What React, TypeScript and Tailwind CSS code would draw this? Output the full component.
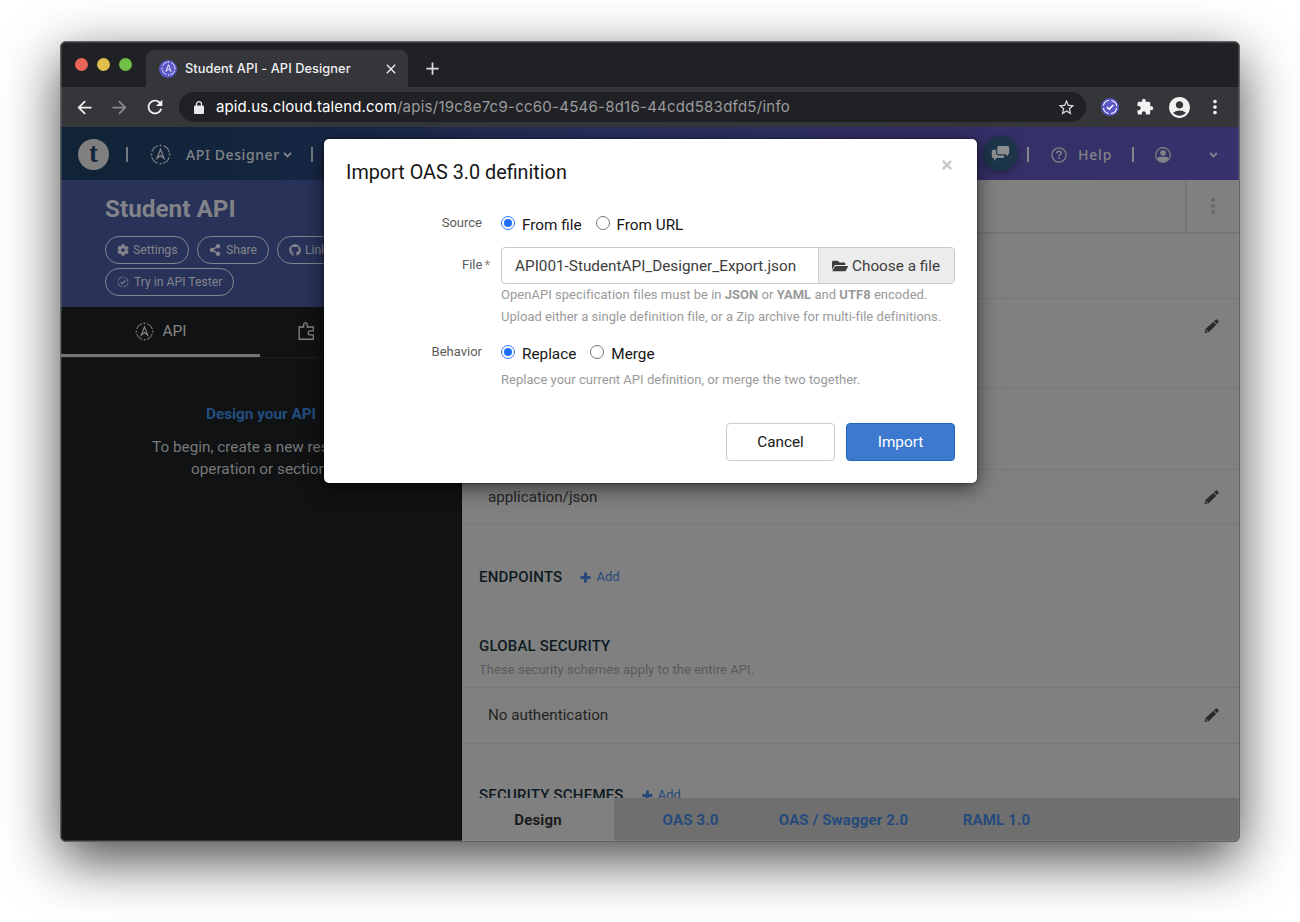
import React from "react";
import {
  MdArrowBack,
  MdArrowForward,
  MdRefresh,
  MdStarBorder,
  MdExtension,
  MdAccountCircle,
  MdMoreVert,
  MdClose,
  MdAdd,
} from "react-icons/md";
import { FaCog, FaShareAlt, FaGithub, FaFolderOpen, FaTimes } from "react-icons/fa";

function Compass({ className = "" }: { className?: string }) {
  return (
    <svg viewBox="0 0 20 20" className={className} fill="none" stroke="currentColor">
      <circle cx="10" cy="10" r="8.7" strokeWidth="1" strokeDasharray="8.66 5" strokeDashoffset="-2.5" />
      <circle cx="10" cy="1.3" r="0.9" fill="currentColor" stroke="none" />
      <circle cx="10" cy="18.7" r="0.9" fill="currentColor" stroke="none" />
      <circle cx="1.3" cy="10" r="0.9" fill="currentColor" stroke="none" />
      <circle cx="18.7" cy="10" r="0.9" fill="currentColor" stroke="none" />
      <path d="M10 5 6.6 13.8 10 11 13.4 13.8z" strokeWidth="1.2" />
    </svg>
  );
}

function CheckRing({ className = "" }: { className?: string }) {
  return (
    <svg viewBox="0 0 20 20" className={className} fill="none" stroke="currentColor">
      <circle cx="10" cy="10" r="8.4" strokeWidth="1.3" strokeDasharray="10.2 3" strokeDashoffset="-1.5" />
      <path d="M6.2 10.2 9 12.8 14 7.4" strokeWidth="2" />
    </svg>
  );
}

function Chevron({ className = "" }: { className?: string }) {
  return (
    <svg viewBox="0 0 10 8" className={className} fill="none" stroke="currentColor" strokeWidth="2.2">
      <path d="M1.2 1.8 5 5.6 8.8 1.8" />
    </svg>
  );
}

function Plus() {
  return (
    <svg viewBox="0 0 11 11" className="mr-[5px] h-[11px] w-[11px]" fill="currentColor">
      <path d="M4 0.5h3V4h3.500v3H7v3.500H4V7H0.500V4H4z" />
    </svg>
  );
}

function Pencil() {
  return (
    <svg viewBox="0 0 16 16" className="h-[15px] w-[15px] text-[#2a2a2a]" fill="currentColor">
      <path d="M10.700 2.400 12.300.9a1.400 1.400 0 0 1 2 0l.9.9a1.400 1.400 0 0 1 0 2L13.700 5.400z" />
      <path fillRule="evenodd" d="M10.100 3 13.100 6 5.300 13.800 1.300 14.900l-.6-.6 1.100-4zM2.800 11.500l-.5 1.700.5.5 1.700-.5z" />
    </svg>
  );
}

function Radio({ checked, label }: { checked?: boolean; label: string }) {
  return (
    <label className="flex h-5 items-start">
      <span
        className={
          checked
            ? "flex h-[14px] w-[14px] items-center justify-center rounded-full border border-[#2b78f5] bg-white"
            : "h-[14px] w-[14px] rounded-full border border-[#767676] bg-white"
        }
      >
        {checked && <span className="h-[8px] w-[8px] rounded-full bg-[#1f70f5]" />}
      </span>
      <span className="ml-[7px] text-[15.3px] leading-[18px] text-[#161616]">{label}</span>
    </label>
  );
}

function BrowserChrome() {
  return (
    <>
      <div className="flex h-[45px] shrink-0 items-end bg-[#202124]">
        <div className="flex h-full w-[85px] items-center gap-[9px] pb-[1px] pl-[14px]">
          <span className="h-[13px] w-[13px] rounded-full bg-[#ec6559]" />
          <span className="h-[13px] w-[13px] rounded-full bg-[#e1bf4e]" />
          <span className="h-[13px] w-[13px] rounded-full bg-[#71bf46]" />
        </div>
        <div className="flex h-[37px] w-[262px] items-center rounded-t-[8px] bg-[#35363a] pl-[13px] pr-[9px]">
          <span className="flex h-[18px] w-[18px] items-center justify-center rounded-full bg-[#5b57c7] text-white">
            <Compass className="h-[15px] w-[15px]" />
          </span>
          <span className="ml-[8px] flex-1 whitespace-nowrap pt-[1px] font-['Inter',sans-serif] text-[12.8px] font-medium tracking-[0.07px] text-[#eef0f1]">
            Student API - API Designer
          </span>
          <MdClose className="h-[16px] w-[16px] text-[#f1f1f1]" />
        </div>
        <div className="flex h-[37px] items-center pl-[14px]">
          <MdAdd className="h-[21px] w-[21px] text-[#dcdde0]" />
        </div>
      </div>
      <div className="flex h-[40px] shrink-0 items-center bg-[#35363a] pl-[13px]">
        <MdArrowBack className="h-[21px] w-[21px] text-[#f1f1f1]" />
        <MdArrowForward className="ml-[14px] h-[21px] w-[21px] text-[#8a8b8e]" />
        <MdRefresh className="ml-[14px] h-[22px] w-[22px] text-[#f1f1f1]" />
        <div className="ml-[13px] flex h-[30px] w-[907px] items-center rounded-full bg-[#202124] pl-[15px] pr-[10px]">
          <svg viewBox="0 0 10 13" className="h-[13px] w-[10px] text-[#e8e9eb]" fill="currentColor">
            <rect x="0" y="4.5" width="10" height="8.5" rx="1" />
            <path d="M2.5 5V3.200a2.500 2.500 0 0 1 5 0V5" fill="none" stroke="currentColor" strokeWidth="1.3" />
          </svg>
          <span className="ml-[12px] flex-1 whitespace-nowrap font-['Inter',sans-serif] text-[15px] tracking-[0.25px] text-[#9a9b9e]">
            <span className="tracking-[0.11px] text-white">apid.us.cloud.talend.com</span>
            /apis/19c8e7c9-cc60-4546-8d16-44cdd583dfd5/info
          </span>
          <MdStarBorder className="h-[19px] w-[19px] text-[#d5d6d9]" />
        </div>
        <span className="ml-[15px] flex h-[18px] w-[18px] items-center justify-center rounded-full bg-[#5b57c7] text-white">
          <CheckRing className="h-[16px] w-[16px]" />
        </span>
        <MdExtension className="ml-[17px] h-[18px] w-[18px] text-[#f1f1f1]" />
        <MdAccountCircle className="ml-[13px] h-[25px] w-[25px] text-[#f1f1f1]" />
        <MdMoreVert className="ml-[12px] h-[22px] w-[22px] text-[#f1f1f1]" />
      </div>
    </>
  );
}

function AppHeader() {
  return (
    <header className="flex h-[53px] shrink-0 items-center bg-[linear-gradient(90deg,#112336_0%,#142540_18%,#28305c_45%,#332f66_72%,#37326b_100%)] pl-[17px] pt-[2px] font-['Noto_Sans',sans-serif] text-[14px] font-medium text-[#828388]">
      <span className="flex h-[31px] w-[31px] items-center justify-center rounded-full bg-[#808080] pb-[3px] font-['Liberation_Serif',serif] text-[27px] font-bold leading-none text-[#13253a]">
        t
      </span>
      <span className="ml-[17px] h-[15px] w-[2px] bg-[#747a82]" />
      <Compass className="ml-[22px] h-[21px] w-[21px]" />
      <span className="ml-[15px] w-[97px] whitespace-nowrap tracking-[0.6px]">API Designer</span>
      <Chevron className="h-[8px] w-[9px]" />
      <span className="ml-[19px] h-[15px] w-[2px] bg-[#747a82]" />
      <span className="-mt-[2px] ml-[670px] flex h-[35px] w-[35px] items-center justify-center rounded-full bg-[#1c3549] text-[#8b8d8f] shadow-[0_2px_6px_rgba(0,0,0,0.3)]">
        <svg viewBox="0 0 20 18" className="h-[17px] w-[19px]" fill="currentColor">
          <path d="M8 1h9.800c.8 0 1.400.6 1.400 1.400v6c0 .8-.6 1.400-1.400 1.400v2.400L15.300 9.800H8c-.8 0-1.400-.6-1.400-1.400v-6C6.600 1.600 7.200 1 8 1z" />
          <path d="M5.400 5v3.600C5.400 10 6.400 11 7.800 11h6v1.400c0 .8-.6 1.400-1.400 1.400H6L3 17v-3.200h-.8c-.8 0-1.400-.6-1.400-1.400v-6C.8 5.600 1.400 5 2.200 5z" />
        </svg>
      </span>
      <span className="ml-[9px] h-[15px] w-[2px] bg-[#85858c]" />
      <svg viewBox="0 0 16 16" className="ml-[22px] h-[16px] w-[16px]" fill="none" stroke="currentColor">
        <circle cx="8" cy="8" r="7.1" strokeWidth="1.3" />
        <path d="M5.800 6.400C5.800 5 6.700 4.300 8 4.300s2.200.8 2.200 1.900c0 1.500-2.100 1.500-2.100 3" strokeWidth="1.5" />
        <path d="M8.100 10.300v1.600" strokeWidth="1.6" />
      </svg>
      <span className="ml-[11px] w-[36px] whitespace-nowrap tracking-[0.8px]">Help</span>
      <span className="ml-[18px] h-[15px] w-[2px] bg-[#85858c]" />
      <svg viewBox="0 0 16 16" className="ml-[21px] h-[16px] w-[16px]">
        <circle cx="8" cy="8" r="7.3" fill="none" stroke="currentColor" strokeWidth="1.2" />
        <circle cx="8" cy="6" r="2.8" fill="currentColor" />
        <path d="M2 11C4 9.300 12 9.300 14 11 12.500 14 10.500 15 8 15s-4.500-1-6-4z" fill="currentColor" />
      </svg>
      <Chevron className="ml-[38px] h-[8px] w-[9px]" />
    </header>
  );
}

function Pill({ children, className }: { children: React.ReactNode; className: string }) {
  return (
    <span
      className={
        "flex h-[28px] shrink-0 items-center whitespace-nowrap rounded-full border border-[#84858c] pl-[11px] text-[12.2px] text-[#84858c] " +
        className
      }
    >
      {children}
    </span>
  );
}

function Sidebar() {
  return (
    <aside className="flex w-[400px] shrink-0 flex-col overflow-hidden bg-[#101213]">
      <div className="h-[127px] shrink-0 bg-[#293259] pl-[44px] pt-[13px]">
        <h1 className="text-[24.3px] font-bold leading-[32px] text-[#828388]">Student API</h1>
        <div className="mt-[11px] flex gap-[8px]">
          <Pill className="w-[84px]">
            <FaCog className="mr-[4px] h-[12px] w-[12px]" />
            Settings
          </Pill>
          <Pill className="w-[72px]">
            <FaShareAlt className="mr-[5px] h-[12px] w-[12px]" />
            Share
          </Pill>
          <Pill className="w-[130px]">
            <FaGithub className="mr-[4px] h-[12px] w-[12px]" />
            Link to GitHub
          </Pill>
        </div>
        <div className="mt-[4px] flex">
          <Pill className="w-[129px]">
            <CheckRing className="mr-[5px] h-[12px] w-[12px]" />
            Try in API Tester
          </Pill>
        </div>
      </div>
      <div className="flex h-[51px] shrink-0 border-b border-[#1c1e1f]">
        <div className="flex h-[50px] w-[199px] items-center justify-center gap-[8px] border-b-[3px] border-[#737475] pl-[1px] pt-[2px] text-[15.5px] text-[#858687]">
          <Compass className="h-[19px] w-[19px]" />
          <span className="pt-[1px]">API</span>
        </div>
        <div className="flex h-[49px] flex-1 items-center pl-[38px] text-[#858687]">
          <svg viewBox="0 0 18 20" className="h-[19px] w-[17px]" fill="none" stroke="currentColor" strokeWidth="1.4">
            <path d="M1.200 5.200H6V2.800a1.900 1.900 0 0 1 3.800 0V5.200H16.200V9.400H13a2 2 0 0 0 0 4.200H16.200V18.200H1.200z" />
          </svg>
          <span className="ml-3 text-[16px]">Library</span>
        </div>
      </div>
      <div className="pt-[45px] text-center text-[15.3px] leading-[22px] text-[#77797a]">
        <div className="font-bold text-[#234f80]">Design your API</div>
        <div className="mt-[11px]">
          To begin, create a new resource,
          <br />
          operation or section.
        </div>
      </div>
    </aside>
  );
}

function Row({ children, className }: { children?: React.ReactNode; className: string }) {
  return (
    <div
      className={
        "flex shrink-0 items-center justify-between border-b border-[#777777] pl-[26px] pr-[20px] text-[15.2px] text-[#242424] " +
        className
      }
    >
      <span>{children}</span>
      <Pencil />
    </div>
  );
}

function Heading({ children, add }: { children: string; add?: boolean }) {
  return (
    <div className="flex items-center pl-[17px] leading-[20px]">
      <span className="text-[15px] font-medium tracking-[0.2px] text-[#0e1a22]">{children}</span>
      {add && (
        <span className="ml-[18px] flex items-center pt-[1px] text-[13px] text-[#264a7c]">
          <Plus />
          Add
        </span>
      )}
    </div>
  );
}

function Content() {
  return (
    <main className="flex min-w-0 flex-1 flex-col border-l border-[#0a0a0a] bg-[#808080]">
      <div className="flex h-[54px] shrink-0 justify-end border-b-2 border-[#757575]">
        <div className="flex w-[54px] flex-col items-center justify-center gap-[2px] border-l-2 border-[#757575]">
          <span className="h-[4px] w-[4px] rounded-[1px] bg-[#6a6a6a]" />
          <span className="h-[4px] w-[4px] rounded-[1px] bg-[#6a6a6a]" />
          <span className="h-[4px] w-[4px] rounded-[1px] bg-[#6a6a6a]" />
        </div>
      </div>
      <div className="flex min-h-0 flex-1 flex-col overflow-hidden">
        <div className="h-[65px] shrink-0 border-b border-[#777777]" />
        <Row className="h-[89px] pb-[33px]" />
        <div className="h-[82px] shrink-0 border-b border-[#777777]" />
        <Row className="h-[55px]">application/json</Row>
        <div className="mt-[41px] shrink-0">
          <Heading add>ENDPOINTS</Heading>
        </div>
        <div className="mt-[49px] shrink-0">
          <Heading>GLOBAL SECURITY</Heading>
        </div>
        <div className="h-[32px] shrink-0 border-b border-[#777777] pl-[17px] pt-[4px] text-[13px] leading-[20px] tracking-[0.04px] text-[#5a5a5a]">
          These security schemes apply to the entire API.
        </div>
        <Row className="h-[56px]">No authentication</Row>
        <div className="mt-[40px] shrink-0">
          <Heading add>SECURITY SCHEMES</Heading>
        </div>
      </div>
      <div className="flex h-[43px] shrink-0 bg-[#6f6f6f] text-[15px] font-bold tracking-[0.15px] text-[#264a7c]">
        <div className="flex w-[152px] items-center justify-center bg-[#808080] pt-[1px] text-[#1b1b1b]">Design</div>
        <div className="flex w-[153px] items-center justify-center pt-[1px]">OAS 3.0</div>
        <div className="flex w-[153px] items-center justify-center pt-[1px]">OAS / Swagger 2.0</div>
        <div className="flex w-[153px] items-center justify-center pt-[1px]">RAML 1.0</div>
      </div>
    </main>
  );
}

function Modal() {
  return (
    <div
      role="dialog"
      className="absolute left-[263px] top-[97px] flex h-[344px] w-[653px] flex-col rounded-[5px] bg-white shadow-[0_0_2px_rgba(0,0,0,0.8),0_5px_20px_rgba(0,0,0,0.6)]"
    >
      <div className="flex justify-between pl-[22px] pr-[23px] pt-[20px]">
        <h2 className="pt-[1px] text-[19.8px] leading-[26px] text-[#161616]">Import OAS 3.0 definition</h2>
        <FaTimes className="-mt-[1px] h-[14px] w-[14px] text-[#c9c9c9]" />
      </div>
      <div className="mt-[30px] flex">
        <div className="w-[158px] text-right text-[13px] leading-[14px] text-[#5c5c5c]">Source</div>
        <div className="flex gap-[14px] pl-[19px]">
          <Radio checked label="From file" />
          <Radio label="From URL" />
        </div>
      </div>
      <div className="mt-[11px] flex">
        <div className="w-[166px] text-right text-[13px] leading-[36px] text-[#5c5c5c]">
          File<span className="ml-[2px] text-[#8a8a8a]">*</span>
        </div>
        <div className="ml-[11px] flex h-[37px] w-[454px] rounded-[4px] border border-[#c9c9c9] text-[15.3px] leading-[36px]">
          <div className="w-[316px] whitespace-nowrap pl-[13px] text-[#3d3d3d]">API001-StudentAPI_Designer_Export.json</div>
          <div className="flex flex-1 items-center rounded-r-[3px] border-l border-[#c9c9c9] bg-[#ececec] pl-[13px] text-[#3d3d3d]">
            <FaFolderOpen className="mr-[4px] h-[16px] w-[16px]" />
            Choose a file
          </div>
        </div>
      </div>
      <div className="pl-[177px] text-[13px] leading-[22px] tracking-[0.025px] text-[#9a9a9a]">
        OpenAPI specification files must be in <b>JSON</b> or <b>YAML</b> and <b>UTF8</b> encoded.
        <br />
        Upload either a single definition file, or a Zip archive for multi-file definitions.
      </div>
      <div className="mt-[17px] flex">
        <div className="w-[158px] text-right text-[13px] leading-[14px] text-[#5c5c5c]">Behavior</div>
        <div className="flex gap-[14px] pl-[19px]">
          <Radio checked label="Replace" />
          <Radio label="Merge" />
        </div>
      </div>
      <div className="mt-[4px] pl-[177px] text-[13px] leading-[22px] tracking-[0.025px] text-[#9a9a9a]">
        Replace your current API definition, or merge the two together.
      </div>
      <div className="mt-[32px] flex justify-end gap-[11px] pr-[22px] text-[15.3px]">
        <button className="h-[38px] w-[109px] rounded-[4px] border border-[#cccccc] bg-white pt-[1px] text-[#161616]">Cancel</button>
        <button className="h-[38px] w-[109px] rounded-[4px] border border-[#1f66bf] bg-[#3d7acf] pt-[1px] text-white">Import</button>
      </div>
    </div>
  );
}

export default function App() {
  return (
    <div className="h-[922px] w-[1300px] overflow-hidden bg-white pl-[60px] pt-[41px] font-['Roboto',sans-serif]">
      <div className="relative flex h-[801px] w-[1180px] flex-col overflow-hidden rounded-[6px] border border-[#5f6263] bg-[#202124] shadow-[0_18px_55px_rgba(0,0,0,0.72)]">
        <BrowserChrome />
        <AppHeader />
        <div className="flex min-h-0 flex-1">
          <Sidebar />
          <Content />
        </div>
        <Modal />
        <div className="pointer-events-none absolute inset-0 rounded-[5px] shadow-[inset_0_0_0_1px_rgba(150,155,155,0.25)]" />
      </div>
    </div>
  );
}
